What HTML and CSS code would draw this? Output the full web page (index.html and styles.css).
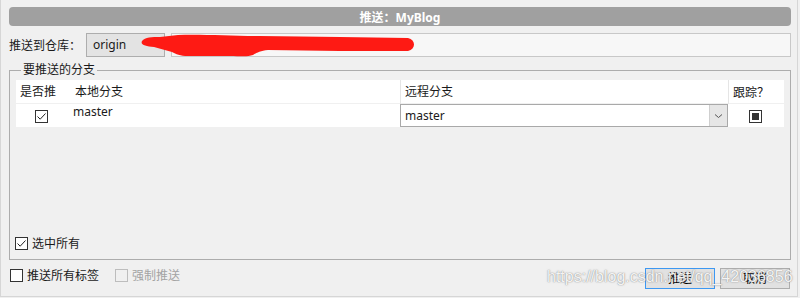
FILE: index.html
```html
<!DOCTYPE html>
<html lang="zh">
<head>
<meta charset="utf-8">
<title>推送：MyBlog</title>
<link rel="stylesheet" href="styles.css">
</head>
<body>
<div class="window">
  <div class="titlebar">推送<span class="punct">：</span>MyBlog</div>

  <div class="repo-row">
    <span class="repo-label">推送到仓库<span class="punct">：</span></span>
    <div class="remote">origin</div>
    <div class="url"></div>
    <svg class="scribble" width="280" height="26" viewBox="0 0 280 26">
      <path d="M2,8 C5,4 12,4 20,4 L38,2 C60,1 90,3 120,3 L200,4 L268,5 C276,7 276,16 268,18 L200,18 L128,17 C120,18 116,20 113,22 C108,24 100,23 90,23 L48,23 C40,23 36,21 32,19 L14,14 C6,13 0,12 2,8 Z" fill="#fe1a14"/>
    </svg>
  </div>

  <fieldset class="group">
    <legend class="group-title">要推送的分支</legend>
    <div class="group-body">
      <div class="branch-table">
        <div class="thead">
          <div class="th">是否推</div>
          <div class="th th-local">本地分支</div>
          <div class="th th-sep">远程分支</div>
          <div class="th th-sep">跟踪<span class="punct">？</span></div>
        </div>
        <div class="trow">
          <div class="td td-push"><span class="cb checked"><svg width="11" height="11" viewBox="0 0 11 11"><path d="M1.5,5.5 L4.2,8.2 L9.5,2.5" fill="none" stroke="#222" stroke-width="1"/></svg></span></div>
          <div class="td td-local">master</div>
          <div class="td td-remote">
            <div class="combo">
              <span class="combo-value">master</span>
              <span class="combo-btn"><svg width="9" height="6" viewBox="0 0 9 6"><path d="M1,1.5 L4.5,4.5 L8,1.5" fill="none" stroke="#555" stroke-width="1"/></svg></span>
            </div>
          </div>
          <div class="td td-track"><span class="cb tri"><span class="tri-fill"></span></span></div>
        </div>
      </div>
      <label class="check select-all"><span class="cb checked"><svg width="11" height="11" viewBox="0 0 11 11"><path d="M1.5,5.5 L4.2,8.2 L9.5,2.5" fill="none" stroke="#222" stroke-width="1"/></svg></span><span>选中所有</span></label>
    </div>
  </fieldset>

  <div class="footer">
    <label class="check"><span class="cb"></span><span>推送所有标签</span></label>
    <label class="check disabled"><span class="cb"></span><span>强制推送</span></label>
    <div class="buttons">
      <button class="btn primary">推送</button>
      <button class="btn">取消</button>
    </div>
  </div>

  <div class="watermark">https://blog.csdn.net/qq_42036856</div>
</div>
</body>
</html>
```

FILE: styles.css
```css
* { box-sizing: border-box; }
html, body { margin: 0; padding: 0; background: #f0f0f0; }
body {
  font-family: "Noto Sans", "Noto Sans CJK SC", sans-serif;
  font-size: 12px;
  color: #1a1a1a;
}
.punct { font-family: "Noto Sans CJK TC", "Noto Sans CJK SC", sans-serif; }
.window {
  position: relative;
  width: 798px;
  height: 297px;
  border: 1px solid #d6d6d6;
  border-top: none;
  padding: 7px 6px 0 8px;
  background: #f0f0f0;
  display: flex;
  flex-direction: column;
}
.titlebar {
  height: 19px;
  background: #a0a0a0;
  border-radius: 4px;
  color: #fff;
  font-weight: bold;
  text-align: center;
  line-height: 19px;
}
.repo-row {
  position: relative;
  margin-top: 7px;
  height: 24px;
  display: flex;
  align-items: center;
}
.repo-label { width: 77px; line-height: 24px; white-space: nowrap; }
.remote {
  width: 79px;
  height: 24px;
  background: #e3e3e3;
  border: 1px solid #adadad;
  padding-left: 6px;
  line-height: 21px;
}
.url {
  flex: 1;
  height: 24px;
  margin-left: 6px;
  background: #f7f7f7;
  border: 1px solid #c8c8c8;
}
.scribble { position: absolute; left: 131px; top: 0; }

.group {
  margin: 6px 0 0 0;
  padding: 0 6px 6px 6px;
  border: 1px solid #acacac;
  height: 197px;
  min-width: 0;
}
.group-title {
  padding: 0 2px;
  margin-left: 5px;
  line-height: 14px;
  height: 14px;
}
.group-body {
  margin-top: 3px;
  height: 172px;
  display: flex;
  flex-direction: column;
}
.branch-table { background: #fff; }
.thead, .trow {
  display: grid;
  grid-template-columns: 55px 329px 328px 55px;
}
.thead { height: 24px; border-bottom: 1px solid #f0f0f0; }
.th { line-height: 23px; padding-left: 4px; white-space: nowrap; }
.th-local { padding-left: 4px; }
.th-sep { border-left: 1px solid #e5e5e5; padding-left: 4px; }
.trow { height: 23px; }
.td-push { padding: 5px 0 0 19px; }
.td-local { padding: 1px 0 0 2px; line-height: 14px; }
.td-remote { padding-top: 0; }
.combo {
  height: 23px;
  border: 1px solid #a9a9a9;
  background: #fff;
  display: flex;
  align-items: stretch;
}
.combo-value { flex: 1; padding-left: 4px; line-height: 21px; }
.combo-btn {
  width: 18px;
  background: #e6e6e6;
  border-left: 1px solid #cfcfcf;
  display: flex;
  align-items: center;
  justify-content: center;
}
.td-track { padding: 3px 0 0 21px; }

.cb {
  width: 13px;
  height: 13px;
  border: 1px solid #333;
  background: #fff;
  display: inline-flex;
  align-items: center;
  justify-content: center;
  flex: none;
}
.tri-fill { width: 7px; height: 7px; background: #333; }

.check { display: flex; align-items: center; gap: 4px; white-space: nowrap; }
.select-all { margin-top: auto; margin-left: -1px; height: 16px; margin-bottom: 1px; }
.check.disabled { color: #a3a3a3; margin-left: 16px; }
.check.disabled .cb { border-color: #bdbdbd; background: #f0f0f0; }

.footer {
  margin-top: 8px;
  display: flex;
  align-items: flex-start;
  padding-left: 1px;
}
.footer .check { height: 14px; }
.buttons { margin-left: auto; display: flex; gap: 5px; margin-right: 1px; }
.btn {
  width: 70px;
  height: 21px;
  font: inherit;
  color: #000;
  background: #e1e1e1;
  border: 1px solid #adadad;
  padding: 0;
  line-height: 18px;
}
.btn.primary { border-color: #3d98f2; }

.watermark {
  position: absolute;
  left: 546px;
  top: 267px;
  font-family: "Liberation Sans", sans-serif;
  font-size: 16px;
  line-height: 20px;
  color: rgba(255, 255, 255, 0.92);
  text-shadow: 0 0 1px rgba(90, 90, 90, 0.7), 0 0 2px rgba(150, 150, 150, 0.5);
  white-space: nowrap;
  pointer-events: none;
}
```
